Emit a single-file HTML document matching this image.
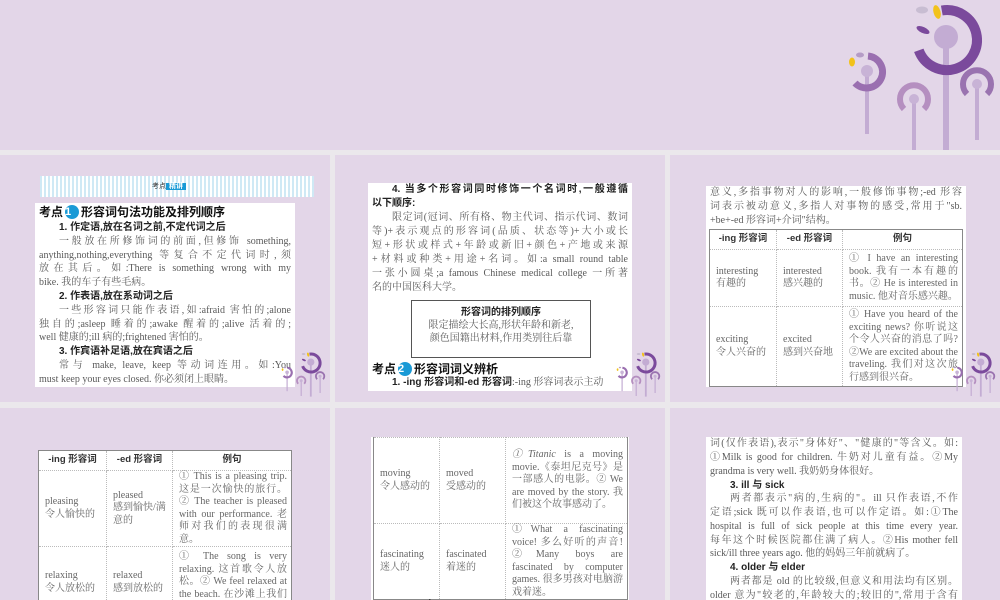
<!DOCTYPE html>
<html><head><meta charset="utf-8">
<style>
*{margin:0;padding:0;box-sizing:border-box}
body{width:1000px;height:600px;background:#ebe8ec;position:relative;overflow:hidden;font-family:"Liberation Serif","Noto Serif CJK SC",serif;color:#5a5a5a}
.top{position:absolute;left:0;top:0;width:1000px;height:150px;background:#e3d6e8}
.sl{position:absolute;background:#e3d6e8;overflow:hidden}
.box{position:absolute;background:#fff}
.l{position:absolute;left:4px;right:4px;height:14px;font-size:10px;line-height:14px;white-space:nowrap;text-align:justify;text-align-last:justify}
.nl{text-align-last:left}
.b{font-family:"Liberation Sans","Noto Sans CJK SC",sans-serif;font-weight:bold;color:#222;text-align-last:left}
.ind{padding-left:20px}
.t{font-size:12px;font-family:"Liberation Sans","Noto Sans CJK SC",sans-serif;font-weight:bold;color:#111;text-align-last:left;height:16px;line-height:16px}
.num{display:inline-block;width:14px;height:14px;border-radius:7px;background:#1a9ad6;color:#fff;font-size:11px;line-height:14px;text-align:center;vertical-align:1px;margin:0 2px}
table{position:absolute;border-collapse:collapse;border:1.5px solid #888;background:#fff;font-size:10px;line-height:12.5px;color:#666}
td{border:1px dotted #bbb;padding:0 4px 0 6px;vertical-align:middle}
th{border:1px dotted #bbb;font-family:"Liberation Sans","Noto Sans CJK SC",sans-serif;font-size:9.5px;color:#333;font-weight:bold;height:20px;border-bottom:1px dotted #bbb}
td.ex{text-align:justify}
</style></head><body>
<div class="top"></div>
<svg style="position:absolute;left:800px;top:0" width="200" height="150" viewBox="0 0 200 150">
<g id="deco">
<rect x="143" y="37" width="6" height="115" fill="#c3acd3"/>
<path d="M141.8 10.5 A30 30 0 1 1 118.8 50.3" fill="none" stroke="#7b4a9c" stroke-width="10"/>
<circle cx="146" cy="37" r="12" fill="#c3acd3"/>
<ellipse cx="137" cy="12" rx="3.5" ry="7" fill="#f2c21b" transform="rotate(-15 137 12)"/>
<ellipse cx="122" cy="10" rx="6" ry="3.5" fill="#c8bdd2"/>
<ellipse cx="123" cy="30" rx="7" ry="3" fill="#7b4a9c" transform="rotate(25 123 30)"/>
<rect x="65" y="71" width="4" height="63" fill="#c3acd3"/>
<path d="M68 56 A16 16 0 1 1 55 83" fill="none" stroke="#9a6fb0" stroke-width="7"/>
<circle cx="67" cy="71" r="6" fill="#c8b3d6"/>
<ellipse cx="52" cy="62" rx="3" ry="4.5" fill="#f2c21b"/>
<ellipse cx="60" cy="55" rx="4" ry="2.5" fill="#b59cc6"/>
<rect x="112" y="99" width="4" height="51" fill="#c3acd3"/>
<path d="M104 109 A14 14 0 1 1 124 109" fill="none" stroke="#b58fc0" stroke-width="6"/>
<circle cx="114" cy="99" r="5" fill="#c8b3d6"/>
<rect x="175" y="84" width="4" height="56" fill="#c3acd3"/>
<path d="M167 94 A14 14 0 1 1 187 94" fill="none" stroke="#9a73b0" stroke-width="6"/>
<circle cx="177" cy="84" r="5" fill="#c8b3d6"/>
</g></svg>

<!-- slide 1 -->
<div class="sl" style="left:0;top:155px;width:330px;height:247px">
<div class="box" style="left:40px;top:21px;width:274px;height:21px;background:repeating-linear-gradient(90deg,#cfe9f5 0 2px,#fff 2px 4px)"></div>
<div style="position:absolute;left:150px;top:26px;width:48px;height:11px;font-size:7px;color:#333;font-family:'Liberation Sans','Noto Sans CJK SC',sans-serif;line-height:11px">&nbsp;考点<span style="background:#1a9ad6;color:#fff;padding:0 3px;font-weight:bold">精讲</span></div>
<div class="box" style="left:35px;top:48px;width:260px;height:184px">
<div class="l t" style="top:1px">考点<span class="num">1</span>形容词句法功能及排列顺序</div>
<div class="l b ind" style="top:18px">1. 作定语,放在名词之前,不定代词之后</div>
<div class="l ind" style="top:32px">一般放在所修饰词的前面,但修饰 something,</div>
<div class="l" style="top:46px">anything,nothing,everything 等复合不定代词时,须</div>
<div class="l" style="top:59px">放在其后。如:There is something wrong with my</div>
<div class="l nl" style="top:73px">bike. 我的车子有些毛病。</div>
<div class="l b ind" style="top:87px">2. 作表语,放在系动词之后</div>
<div class="l ind" style="top:101px">一些形容词只能作表语,如:afraid 害怕的;alone</div>
<div class="l" style="top:115px">独自的;asleep 睡着的;awake 醒着的;alive 活着的;</div>
<div class="l nl" style="top:128px">well 健康的;ill 病的;frightened 害怕的。</div>
<div class="l b ind" style="top:142px">3. 作宾语补足语,放在宾语之后</div>
<div class="l ind" style="top:156px">常与 make, leave, keep 等动词连用。如:You</div>
<div class="l nl" style="top:170px">must keep your eyes closed. 你必须闭上眼睛。</div>
</div>
<svg style="position:absolute;left:267px;top:196px" width="60" height="60" viewBox="0 0 200 200"><use href="#deco"/></svg>
</div>

<!-- slide 2 -->
<div class="sl" style="left:335px;top:155px;width:330px;height:247px">
<div class="box" style="left:33px;top:28px;width:264px;height:208px">
<div class="l b ind" style="top:0px;text-align-last:justify">4. 当多个形容词同时修饰一个名词时,一般遵循</div>
<div class="l b" style="top:14px">以下顺序:</div>
<div class="l ind" style="top:28px">限定词(冠词、所有格、物主代词、指示代词、数词</div>
<div class="l" style="top:42px">等)+表示观点的形容词(品质、状态等)+大小或长</div>
<div class="l" style="top:56px">短+形状或样式+年龄或新旧+颜色+产地或来源</div>
<div class="l" style="top:70px">+材料或种类+用途+名词。如:a small round table</div>
<div class="l" style="top:84px">一张小圆桌;a famous Chinese medical college 一所著</div>
<div class="l nl" style="top:98px">名的中国医科大学。</div>
<div style="position:absolute;left:43px;top:117px;width:180px;height:58px;border:1px solid #555;text-align:center;font-size:10px;line-height:13px;padding-top:5px">
<div style="font-family:'Liberation Sans','Noto Sans CJK SC',sans-serif;font-weight:bold;color:#222">形容词的排列顺序</div>
<div>限定描绘大长高,形状年龄和新老,</div><div>颜色国籍出材料,作用类别往后靠</div></div>
<div class="l t" style="top:178px">考点<span class="num">2</span>形容词词义辨析</div>
<div class="l ind" style="top:193px;text-align-last:left"><b style="color:#222;font-family:'Liberation Sans','Noto Sans CJK SC',sans-serif">1. -ing 形容词和-ed 形容词</b>:-ing 形容词表示主动</div>
</div>
<svg style="position:absolute;left:267px;top:196px" width="60" height="60" viewBox="0 0 200 200"><use href="#deco"/></svg>
</div>

<!-- slide 3 -->
<div class="sl" style="left:670px;top:155px;width:330px;height:247px">
<div class="box" style="left:36px;top:31px;width:260px;height:201px">
<div class="l" style="top:0px">意义,多指事物对人的影响,一般修饰事物;-ed 形容</div>
<div class="l" style="top:14px">词表示被动意义,多指人对事物的感受,常用于"sb.</div>
<div class="l nl" style="top:28px">+be+-ed 形容词+介词"结构。</div>
</div>
<table style="left:39px;top:74px;width:254px;height:158px">
<tr><th style="width:67px">-ing 形容词</th><th style="width:66px">-ed 形容词</th><th>例句</th></tr>
<tr style="height:57px"><td>interesting<br>有趣的</td><td>interested<br>感兴趣的</td><td class="ex">① I have an interesting book. 我有一本有趣的书。② He is interested in music. 他对音乐感兴趣。</td></tr>
<tr><td>exciting<br>令人兴奋的</td><td>excited<br>感到兴奋地</td><td class="ex">① Have you heard of the exciting news? 你听说这个令人兴奋的消息了吗? ②We are excited about the traveling. 我们对这次旅行感到很兴奋。</td></tr>
</table>
<svg style="position:absolute;left:267px;top:196px" width="60" height="60" viewBox="0 0 200 200"><use href="#deco"/></svg>
</div>

<!-- slide 4 -->
<div class="sl" style="left:0;top:408px;width:330px;height:192px">
<table style="left:38px;top:42px;width:254px">
<tr><th style="width:68px">-ing 形容词</th><th style="width:66px">-ed 形容词</th><th>例句</th></tr>
<tr style="height:72px"><td>pleasing<br>令人愉快的</td><td>pleased<br>感到愉快/满意的</td><td class="ex">① This is a pleasing trip. 这是一次愉快的旅行。② The teacher is pleased with our performance. 老师对我们的表现很满意。</td></tr>
<tr style="height:72px"><td>relaxing<br>令人放松的</td><td>relaxed<br>感到放松的</td><td class="ex" style="vertical-align:top;padding-top:4px">① The song is very relaxing. 这首歌令人放松。② We feel relaxed at the beach. 在沙滩上我们感觉很放松。</td></tr>
</table>
</div>

<!-- slide 5 -->
<div class="sl" style="left:335px;top:408px;width:330px;height:192px">
<div class="box" style="left:36px;top:29px;width:258px;height:170px"></div>
<table style="left:38px;top:29px;width:255px;border-top:none">
<tr style="height:86px"><td style="width:66px">moving<br>令人感动的</td><td style="width:66px">moved<br>受感动的</td><td class="ex"><i>①Titanic</i> is a moving movie.《泰坦尼克号》是一部感人的电影。② We are moved by the story. 我们被这个故事感动了。</td></tr>
<tr style="height:74px"><td>fascinating<br>迷人的</td><td>fascinated<br>着迷的</td><td class="ex">①What a fascinating voice! 多么好听的声音! ②Many boys are fascinated by computer games. 很多男孩对电脑游戏着迷。</td></tr>
</table>
<div style="position:absolute;left:62px;top:188px;font-size:10px;font-weight:bold;color:#222">2. well 与 good</div>
</div>

<!-- slide 6 -->
<div class="sl" style="left:670px;top:408px;width:330px;height:192px">
<div class="box" style="left:36px;top:29px;width:256px;height:170px">
<div class="l" style="top:0px">词(仅作表语),表示"身体好"、"健康的"等含义。如:</div>
<div class="l" style="top:14px">①Milk is good for children. 牛奶对儿童有益。②My</div>
<div class="l nl" style="top:28px">grandma is very well. 我奶奶身体很好。</div>
<div class="l b ind" style="top:42px">3. ill 与 sick</div>
<div class="l ind" style="top:55px">两者都表示"病的,生病的"。ill 只作表语,不作</div>
<div class="l" style="top:69px">定语;sick 既可以作表语,也可以作定语。如:①The</div>
<div class="l" style="top:83px">hospital is full of sick people at this time every year.</div>
<div class="l" style="top:97px">每年这个时候医院都住满了病人。②His mother fell</div>
<div class="l nl" style="top:110px">sick/ill three years ago. 他的妈妈三年前就病了。</div>
<div class="l b ind" style="top:124px">4. older 与 elder</div>
<div class="l ind" style="top:138px">两者都是 old 的比较级,但意义和用法均有区别。</div>
<div class="l" style="top:152px">older 意为"较老的,年龄较大的;较旧的",常用于含有</div>
</div>
</div>
</body></html>
